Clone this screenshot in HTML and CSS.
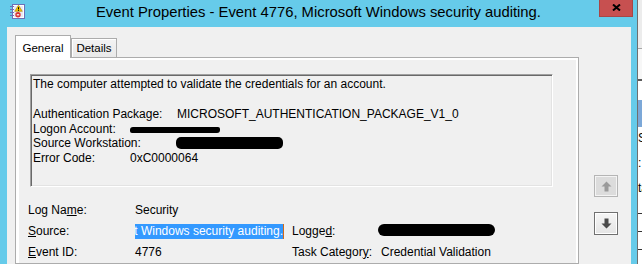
FILE: index.html
```html
<!DOCTYPE html>
<html>
<head>
<meta charset="utf-8">
<title>Event Properties</title>
<link rel="stylesheet" href="styles.css">
</head>
<body>
<div class="screen">
  <div class="dialog">
    <div class="titlebar">
      <svg class="app-icon" width="15" height="15" viewBox="0 0 15 15">
        <rect x="2.5" y="0.5" width="12" height="14" fill="#ffffff" stroke="#6c70b8"/>
        <rect x="4" y="2" width="9" height="11" fill="#e9e9f5"/>
        <g fill="#6c70b8">
          <rect x="0" y="2" width="4" height="1"/>
          <rect x="0" y="5" width="4" height="1"/>
          <rect x="0" y="8" width="4" height="1"/>
          <rect x="0" y="11" width="4" height="1"/>
        </g>
        <path d="M8.5 1.2 L12.3 7.3 H4.7 Z" fill="#f3c200" stroke="#a88400" stroke-width="0.6"/>
        <rect x="8" y="3.2" width="1" height="2.2" fill="#000"/>
        <rect x="8" y="6" width="1" height="0.8" fill="#000"/>
        <circle cx="8" cy="10.8" r="2.7" fill="#d83535"/>
        <rect x="6.8" y="10.2" width="2.4" height="1.2" fill="#ffffff"/>
      </svg>
      <div class="title">Event Properties - Event 4776, Microsoft Windows security auditing.</div>
      <div class="close">
        <svg width="9" height="7" viewBox="0 0 9 7">
          <path d="M1 0.5 L8 6.5 M8 0.5 L1 6.5" stroke="#000" stroke-width="2" fill="none"/>
        </svg>
      </div>
    </div>
    <div class="client">
      <div class="tabarea">
        <div class="tabs">
          <div class="tab active">General</div>
          <div class="tab">Details</div>
        </div>
        <div class="panel">
          <div class="page">
            <div class="desc">
              <div class="dline">The computer attempted to validate the credentials for an account.</div>
              <div class="dline">&nbsp;</div>
              <div class="dline"><span class="k k144">Authentication Package:</span>MICROSOFT_AUTHENTICATION_PACKAGE_V1_0</div>
              <div class="dline"><span class="k k97">Logon Account:</span><span class="redact r1"></span></div>
              <div class="dline"><span class="k k143">Source Workstation:</span><span class="redact r2"></span></div>
              <div class="dline"><span class="k k97">Error Code:</span>0xC0000064</div>
            </div>
            <div class="fields">
              <span class="lbl">Log Na<u>m</u>e:</span>
              <span class="val">Security</span>
              <span class="lbl"></span>
              <span class="val"></span>

              <span class="lbl"><u>S</u>ource:</span>
              <span class="val"><span class="selbox"><span class="sel">Microsoft Windows security auditing.</span></span></span>
              <span class="lbl">Logge<u>d</u>:</span>
              <span class="val"><span class="redact r3"></span></span>

              <span class="lbl"><u>E</u>vent ID:</span>
              <span class="val">4776</span>
              <span class="lbl">Task Categor<u>y</u>:</span>
              <span class="val">Credential Validation</span>
            </div>
          </div>
        </div>
      </div>
      <div class="navbtns">
        <div class="navbtn disabled">
          <svg width="11" height="11" viewBox="0 0 11 11"><path d="M5.5 0.5 L10.5 5.5 H7.5 V10.5 H3.5 V5.5 H0.5 Z" fill="#9a9a9a"/></svg>
        </div>
        <div class="navbtn">
          <svg width="11" height="11" viewBox="0 0 11 11"><path d="M5.5 10.5 L10.5 5.5 H7.5 V0.5 H3.5 V5.5 H0.5 Z" fill="#4a4a4a"/></svg>
        </div>
      </div>
    </div>
  </div>
  <div class="behind">
    <div class="b-head"></div>
    <div class="b-band"></div>
    <div class="b-gap"></div>
    <div class="b-sel"></div>
    <div class="b-text">
      <div class="b-line">Su</div>
      <div class="b-line">:</div>
      <div class="b-line">ta</div>
    </div>
    <div class="b-tick"></div>
    <div class="b-tick"></div>
    <div class="b-tick"></div>
    <div class="b-tick"></div>
  </div>
</div>
</body>
</html>
```
FILE: styles.css
```css
* { box-sizing: border-box; }

html, body {
  margin: 0;
  padding: 0;
}

body {
  width: 642px;
  height: 264px;
  overflow: hidden;
  font-family: "Liberation Sans", Arial, sans-serif;
  font-size: 12px;
  color: #000;
  background: #66cbea;
}

.screen {
  display: flex;
  width: 642px;
  height: 264px;
  overflow: hidden;
}

/* ---------- dialog ---------- */
.dialog {
  width: 637px;
  height: 264px;
  flex: none;
  display: flex;
  flex-direction: column;
  background: #66cbea;
}

.titlebar {
  height: 27px;
  flex: none;
  display: flex;
  align-items: flex-start;
}

.app-icon {
  margin: 4px 0 0 10px;
  flex: none;
}

.title {
  margin: 4px 0 0 71px;
  font-size: 14.8px;
  line-height: 17px;
  white-space: nowrap;
  color: #000;
}

.close {
  margin-left: auto;
  margin-right: 4px;
  width: 34px;
  height: 17px;
  background: #c75050;
  border: 1px solid #a84646;
  border-top: 0;
  display: flex;
  align-items: center;
  justify-content: center;
  padding-bottom: 2px;
}

.client {
  flex: 1;
  margin: 0 6px 0 7px;
  background: #f0f0f0;
  display: flex;
  padding: 8px 0 0 8px;
  overflow: hidden;
}

/* ---------- tabs ---------- */
.tabarea {
  width: 564px;
  flex: none;
  display: flex;
  flex-direction: column;
}

.tabs {
  display: flex;
  align-items: flex-end;
}

.tab {
  border: 1px solid #acacac;
  border-bottom: 0;
  font-size: 11.5px;
  line-height: 14px;
  text-align: center;
  height: 19px;
  width: 46px;
  padding-top: 2px;
  background: linear-gradient(#f3f3f3, #e9e9e9);
  box-shadow: inset 1px 1px 0 #ffffff;
}

.tab.active {
  width: 56px;
  height: 23px;
  padding-top: 5px;
  margin-bottom: -1px;
  background: #ffffff;
  box-shadow: none;
  position: relative;
  z-index: 1;
}

.panel {
  border: 1px solid #acacac;
  background: #ffffff;
  padding: 2px 2px 0 3px;
  height: 260px;
}

.page {
  background: #f0f0f0;
  height: 100%;
  padding: 14px 0 0 11px;
}

/* ---------- description box ---------- */
.desc {
  width: 523px;
  height: 113px;
  border: 1px solid;
  border-color: #a0a0a0 #ffffff #ffffff #a0a0a0;
  box-shadow: inset 1px 1px 0 #696969, inset -1px -1px 0 #e3e3e3;
  background: #f0f0f0;
  padding: 2px 0 0 2px;
  line-height: 14.85px;
  white-space: nowrap;
}

.k { display: inline-block; }
.k97 { width: 97px; }
.k143 { width: 143px; }
.k144 { width: 144px; }

.redact {
  display: inline-block;
  background: #000;
}

.r1 {
  width: 90px;
  height: 6px;
  border-radius: 3px 2px 3px 2px;
}

.r2 {
  width: 107px;
  height: 12px;
  border-radius: 5px;
  vertical-align: -2px;
}

.r3 {
  width: 117px;
  height: 12px;
  border-radius: 6px;
  vertical-align: -1px;
  margin-left: -3px;
}

/* ---------- fields ---------- */
.fields {
  display: grid;
  grid-template-columns: 107px 157px 89px 1fr;
  grid-auto-rows: 21px;
  margin: 13px 0 0 -2px;
  line-height: 21px;
  white-space: nowrap;
}

.lbl u, .val u { text-decoration-thickness: 1px; }

.selbox {
  display: flex;
  justify-content: flex-end;
  width: 149px;
  height: 15px;
  margin-top: 3px;
  overflow: hidden;
  line-height: 15px;
  border-right: 1px solid #d06a1a;
}

.sel {
  flex: none;
  background: #3399ff;
  color: #ffffff;
  white-space: nowrap;
}

/* ---------- nav buttons ---------- */
.navbtns {
  margin: 140px 0 0 15px;
  display: flex;
  flex-direction: column;
  gap: 15px;
}

.navbtn {
  width: 24px;
  height: 23px;
  border: 1px solid #707070;
  box-shadow: inset 0 0 0 1px #ffffff;
  background: linear-gradient(#f6f6f6, #e4e4e4);
  display: flex;
  align-items: center;
  justify-content: center;
}

.navbtn.disabled {
  height: 22px;
  border-color: #b5b5b5;
  background: #dcdcdc;
  box-shadow: inset 0 0 0 1px #f4f4f4;
}

/* ---------- window behind ---------- */
.behind {
  flex: 1;
  border-left: 1px solid #6f6f6f;
  background: #ffffff;
  display: flex;
  flex-direction: column;
  overflow: hidden;
}

.b-head {
  height: 49px;
  background: #ececec;
  border-bottom: 1px solid #a8a8a8;
  flex: none;
}

.b-band {
  height: 32px;
  background: #f7f7f7;
  border-bottom: 2px solid #5a5a5a;
  flex: none;
}

.b-gap { height: 19px; flex: none; }

.b-sel {
  height: 27px;
  background: #7ca8d8;
  flex: none;
}

.b-text {
  height: 86px;
  padding-top: 5px;
  flex: none;
}

.b-line {
  height: 25px;
  line-height: 12px;
  white-space: nowrap;
}

.b-tick {
  height: 1px;
  background: #333;
  margin-bottom: 17px;
  flex: none;
}
```
